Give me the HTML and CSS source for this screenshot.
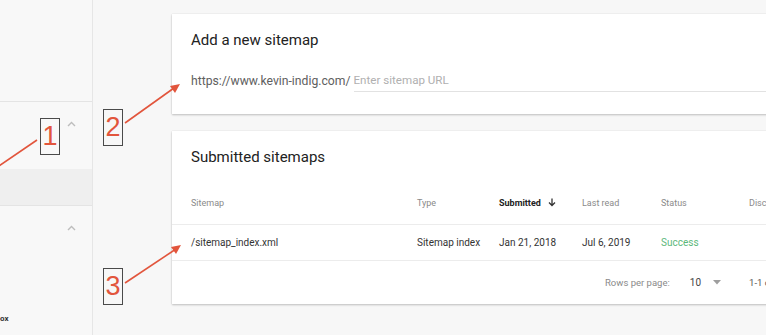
FILE: index.html
```html
<!DOCTYPE html>
<html>
<head>
<meta charset="utf-8">
<link rel="stylesheet" href="styles.css">
</head>
<body>
<div class="app">
  <aside class="sidebar">
    <div class="side-top"></div>
    <div class="side-group">
      <div class="side-head"><svg class="chev" width="9" height="6" viewBox="0 0 9 6"><polyline points="1,5 4.5,1.5 8,5" fill="none" stroke="#bdbdbd" stroke-width="1.4"/></svg></div>
      <div class="side-item active"></div>
    </div>
    <div class="side-group last">
      <div class="side-head small"><svg class="chev" width="9" height="6" viewBox="0 0 9 6"><polyline points="1,5 4.5,1.5 8,5" fill="none" stroke="#bdbdbd" stroke-width="1.4"/></svg></div>
      <div class="side-label">ox</div>
    </div>
  </aside>

  <main class="main">
    <section class="card add">
      <h2 class="card-title">Add a new sitemap</h2>
      <div class="url-row">
        <span class="prefix">https://www.kevin-indig.com/</span>
        <span class="input">Enter sitemap URL</span>
      </div>
    </section>

    <section class="card list">
      <h2 class="card-title">Submitted sitemaps</h2>
      <div class="trow thead">
        <span>Sitemap</span>
        <span>Type</span>
        <span class="sorted">Submitted <svg class="sort" width="8" height="9" viewBox="0 0 8 9"><path d="M4 0.5v7M1 4.5l3 3 3-3" fill="none" stroke="#333" stroke-width="1.3"/></svg></span>
        <span>Last read</span>
        <span>Status</span>
        <span>Discovered URLs</span>
      </div>
      <div class="trow tbody">
        <span>/sitemap_index.xml</span>
        <span>Sitemap index</span>
        <span>Jan 21, 2018</span>
        <span>Jul 6, 2019</span>
        <span class="ok">Success</span>
        <span></span>
      </div>
      <div class="tfoot">
        <span class="rpp">Rows per page:</span>
        <span class="num">10</span>
        <svg class="dd" width="8" height="5" viewBox="0 0 8 5"><path d="M0 0h8L4 4.5z" fill="#9e9e9e"/></svg>
        <span class="range">1-1 of 1</span>
      </div>
    </section>
  </main>

  <div class="note n1">1</div>
  <div class="note n2">2</div>
  <div class="note n3">3</div>

  <svg class="arrows" width="766" height="335" viewBox="0 0 766 335">
    <g stroke="#e2553c" stroke-width="1.6" fill="none">
      <line x1="37" y1="140" x2="-4" y2="168"/>
      <line x1="125" y1="123" x2="174" y2="88"/>
      <line x1="125" y1="283" x2="176" y2="249"/>
    </g>
    <g fill="#e2553c">
      <polygon points="180,84 170,86 175,93"/>
      <polygon points="181,245 171,247 176,254"/>
    </g>
  </svg>
</div>
</body>
</html>
```

FILE: styles.css
```css
* { box-sizing: border-box; }
html, body { margin: 0; padding: 0; }
body {
  width: 766px;
  height: 335px;
  overflow: hidden;
  background: #f7f7f7;
  font-family: Roboto, "Liberation Sans", Arial, sans-serif;
  color: #212121;
}
.app {
  position: relative;
  display: flex;
  width: 766px;
  height: 335px;
  overflow: hidden;
}
.sidebar {
  width: 93px;
  flex: none;
  background: #f8f8f8;
  border-right: 1px solid #e6e6e6;
  display: flex;
  flex-direction: column;
}
.side-top { height: 101px; }
.side-group { border-top: 1px solid #e4e4e4; }
.side-head {
  height: 67px;
  display: flex;
  justify-content: flex-end;
  align-items: flex-start;
  padding: 19px 16px 0 0;
}
.side-head.small { height: 104px; padding-top: 19px; }
.side-item.active {
  height: 36px;
  background: #efefef;
}
.side-group.last { flex: 1; }
.side-label {
  font-size: 8px;
  font-weight: 700;
  color: #333;
  padding-top: 4px;
  line-height: 10px;
}

.main {
  flex: 1;
  padding: 14px 0 0 79px;
  display: flex;
  flex-direction: column;
  gap: 17px;
  min-width: 0;
}
.card {
  width: 680px;
  flex: none;
  background: #fff;
  box-shadow: 0 1px 2px rgba(0,0,0,0.22), 0 0 1px rgba(0,0,0,0.12);
}
.add { height: 100px; padding: 16px 0 0 19px; }
.list { height: 173px; padding-top: 16px; }
.card-title {
  margin: 0;
  font-size: 15px;
  font-weight: 400;
  line-height: 20px;
  color: #222;
}
.list .card-title { padding-left: 19px; }
.url-row {
  margin-top: 23px;
  display: flex;
  align-items: flex-end;
  font-size: 12.2px;
  line-height: 14px;
}
.prefix { color: #606060; padding-bottom: 4px; }
.input {
  flex: 1;
  margin-left: 3px;
  color: #b0b0b0;
  border-bottom: 1px solid #e2e2e2;
  padding-bottom: 4px;
  font-size: 11.6px;
}

.trow {
  display: grid;
  grid-template-columns: 226px 82px 83px 79px 88px 1fr;
  align-items: center;
  padding-left: 19px;
  border-bottom: 1px solid #ececec;
  white-space: nowrap;
}
.thead {
  margin-top: 14px;
  height: 44px;
  font-size: 9px;
  color: #8a8a8a;
}
.thead .sorted {
  color: #222;
  font-weight: 700;
  display: flex;
  align-items: center;
  gap: 7px;
}
.tbody {
  height: 36px;
  font-size: 10px;
  color: #333;
}
.ok { color: #5cb87a; }
.tfoot {
  height: 42px;
  display: flex;
  align-items: center;
  padding-left: 433px;
  font-size: 9.5px;
  color: #8a8a8a;
  white-space: nowrap;
}
.num { margin-left: 20px; color: #444; font-size: 10px; }
.dd { margin-left: 12px; }
.range { margin-left: 28px; color: #555; }

.note {
  position: absolute;
  width: 20px;
  height: 37px;
  border: 1.5px solid #4a4a4a;
  color: #e2553c;
  font-family: "Liberation Sans", Arial, sans-serif;
  font-size: 27px;
  line-height: 34px;
  text-align: center;
}
.n1 { left: 40px; top: 118px; }
.n2 { left: 103px; top: 109px; }
.n3 { left: 103px; top: 268px; }
.arrows {
  position: absolute;
  left: 0;
  top: 0;
  pointer-events: none;
}
```
